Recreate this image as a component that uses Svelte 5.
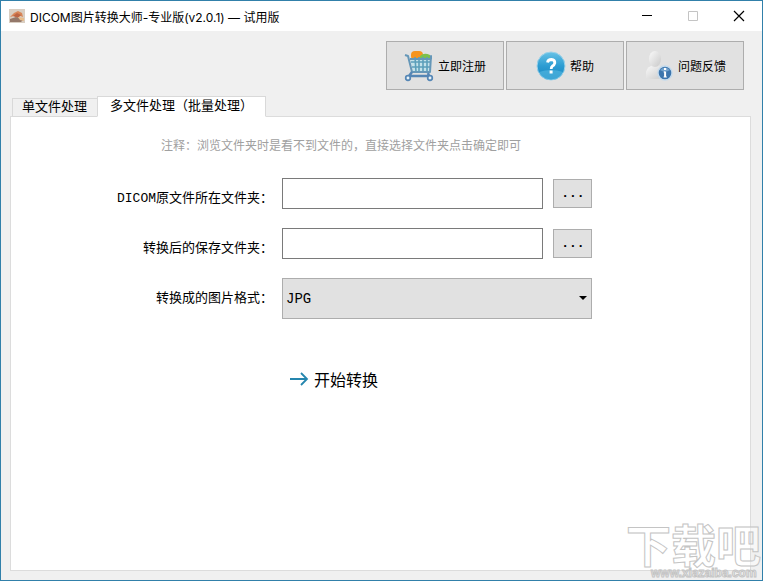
<script lang="ts">
  let activeTab = $state('batch');
  let sourceFolder = $state('');
  let targetFolder = $state('');
  let format = $state('JPG');

  const tabs = [
    { id: 'single', label: '单文件处理' },
    { id: 'batch', label: '多文件处理（批量处理）' },
  ];
  const formats = ['JPG', 'PNG', 'BMP', 'TIF'];
</script>

<main class="window">
  <header class="titlebar">
    <svg class="app-icon" viewBox="0 0 16 14" aria-hidden="true">
      <rect width="16" height="14" fill="#d9cec2" />
      <path d="M1 8L5 4L9 2L13 4L14 8L9 6Z" fill="#d98658" />
      <path d="M4 7L8 4L12 6L9 9Z" fill="#bd6443" />
      <path d="M1 10L7 8L14 11L12 13L1 13Z" fill="#94786a" />
      <path d="M9 8L15 9L15 12L11 11Z" fill="#e9bd8a" />
    </svg>
    <h1>DICOM图片转换大师-专业版(v2.0.1) — 试用版</h1>
    <div class="controls">
      <button aria-label="最小化">
        <svg viewBox="0 0 12 12"><path d="M1 5.5H11" stroke="#000" /></svg>
      </button>
      <button aria-label="最大化" disabled>
        <svg viewBox="0 0 12 12"><path d="M1.5 1.5H10.5V10.5H1.5Z" fill="none" stroke="#c4c4c4" /></svg>
      </button>
      <button aria-label="关闭">
        <svg viewBox="0 0 12 12"><path d="M1 1L11 11M11 1L1 11" stroke="#000" stroke-width="1.2" /></svg>
      </button>
    </div>
  </header>

  <nav class="toolbar">
    <button>
      <svg width="30" height="32" viewBox="0 0 30 32" aria-hidden="true">
        <rect x="7" y="1" width="12" height="9" rx="4" fill="#f7941d" />
        <path d="M16 9V6Q20 2 26 5V9Z" fill="#7cc04b" />
        <path d="M6 9H27L26 21H9Z" fill="#c3e2ea" />
        <path d="M7 12H26M8 17H26M11 7L12 22M15 7V22M19 7V22M23 7V22" stroke="#5c9fba" stroke-width="1.6" fill="none" />
        <path d="M1 5L4 6L8 22H26L27 6V9H6" stroke="#6597b8" stroke-width="2" stroke-linejoin="round" fill="none" />
        <path d="M8 22L5 26H25L24 23" stroke="#5586b5" stroke-width="2.5" stroke-linejoin="round" fill="none" />
        <circle cx="4" cy="28" r="2.3" fill="#e7f2f7" stroke="#5586b5" stroke-width="1.7" />
        <circle cx="26" cy="28" r="2.3" fill="#e7f2f7" stroke="#5586b5" stroke-width="1.7" />
      </svg>
      <span>立即注册</span>
    </button>
    <button>
      <svg width="30" height="32" viewBox="0 0 30 32" aria-hidden="true">
        <defs>
          <linearGradient id="helpFill" x1="0" y1="0" x2="0" y2="1">
            <stop offset="0" stop-color="#67c2e6" />
            <stop offset="0.5" stop-color="#2c9cd2" />
            <stop offset="1" stop-color="#1683be" />
          </linearGradient>
        </defs>
        <circle cx="15" cy="16" r="14" fill="url(#helpFill)" stroke="#9bd2ea" />
        <path d="M3 22A13 13 0 0 0 27 22Q15 18 3 22Z" fill="#58bbe2" opacity="0.6" />
        <path d="M11.5 12.5Q12 9.5 15.5 9.5Q19 9.8 18.8 13Q18.4 15 16.5 16Q15.2 16.8 15.2 19" stroke="#fff" stroke-width="2.8" fill="none" />
        <rect x="13.6" y="20.5" width="3" height="3" fill="#fff" />
      </svg>
      <span>帮助</span>
    </button>
    <button>
      <svg width="30" height="32" viewBox="0 0 30 32" aria-hidden="true">
        <defs>
          <linearGradient id="personFill" x1="0" y1="0" x2="1" y2="1">
            <stop offset="0" stop-color="#fafafa" />
            <stop offset="1" stop-color="#c9c9c9" />
          </linearGradient>
        </defs>
        <path d="M2 28V22Q3 16 11 15Q19 16 20 22V28Q11 30 2 28Z" fill="url(#personFill)" />
        <ellipse cx="11" cy="9" rx="6" ry="8" fill="url(#personFill)" />
        <circle cx="21" cy="23" r="7" fill="#3c75ad" stroke="#c5dbed" stroke-width="1.4" />
        <path d="M16 20Q21 15 26 20Q21 23 16 20Z" fill="#8ab5da" opacity="0.7" />
        <rect x="20" y="18" width="2.2" height="2" fill="#fff" />
        <path d="M21.1 21.5V27" stroke="#fff" stroke-width="2" fill="none" />
        <path d="M19.6 22H21M19.6 27H22.8" stroke="#fff" fill="none" />
      </svg>
      <span>问题反馈</span>
    </button>
  </nav>

  <div class="tabs" role="tablist">
    {#each tabs as tab}
      <button
        role="tab"
        class:active={activeTab === tab.id}
        aria-selected={activeTab === tab.id}
        onclick={() => (activeTab = tab.id)}
      >{tab.label}</button>
    {/each}
  </div>

  <section class="panel">
    <p class="note">注释：浏览文件夹时是看不到文件的，直接选择文件夹点击确定即可</p>

    <form onsubmit={(e) => e.preventDefault()}>
      <label for="source">DICOM原文件所在文件夹：</label>
      <div class="field">
        <input id="source" type="text" bind:value={sourceFolder} />
        <button type="button" class="browse">...</button>
      </div>

      <label for="target">转换后的保存文件夹：</label>
      <div class="field">
        <input id="target" type="text" bind:value={targetFolder} />
        <button type="button" class="browse">...</button>
      </div>

      <label for="format">转换成的图片格式：</label>
      <div class="field">
        <select id="format" bind:value={format}>
          {#each formats as item}
            <option value={item}>{item}</option>
          {/each}
        </select>
        <svg class="caret" width="8" height="4" viewBox="0 0 8 4" aria-hidden="true"><path d="M0 0H8L4 4Z" /></svg>
      </div>

      <button type="submit" class="start">
        <svg width="20" height="14" viewBox="0 0 20 14" aria-hidden="true">
          <path d="M1 7H18M12 1L18 7L12 13" fill="none" stroke="#2586ae" stroke-width="1.8" />
        </svg>
        <span>开始转换</span>
      </button>
    </form>
  </section>

  <svg class="watermark" width="136" height="58" viewBox="0 0 136 58">
    <text class="mark" x="0" y="41">下载吧</text>
    <text class="site" x="25" y="55">www.xiazaiba.com</text>
  </svg>
</main>

<style>
  :global(body) {
    margin: 0;
  }

  .window {
    position: relative;
    box-sizing: border-box;
    display: flex;
    flex-direction: column;
    min-height: 100vh;
    padding-bottom: 9px;
    border: 1px solid #3180aa;
    background: #f0f0f0;
    color: #000;
    font-family: "Liberation Mono", "Noto Sans CJK SC", monospace;
    font-size: 13px;
  }

  button,
  input,
  select {
    box-sizing: border-box;
    margin: 0;
    padding: 0;
    border-radius: 0;
    color: inherit;
    font: inherit;
  }

  .titlebar {
    display: flex;
    align-items: center;
    height: 30px;
    padding-left: 8px;
    background: #fff;
  }

  .app-icon {
    width: 16px;
    height: 14px;
    margin-right: 5px;
  }

  h1 {
    flex: 1;
    margin: 0;
    font: 12px Inter, "Noto Sans CJK SC", sans-serif;
    white-space: nowrap;
  }

  .controls {
    display: flex;
  }

  .controls button {
    display: grid;
    place-items: center;
    width: 46px;
    height: 28px;
    border: 0;
    background: none;
  }

  .controls svg {
    width: 12px;
    height: 12px;
  }

  .toolbar {
    display: flex;
    justify-content: flex-end;
    gap: 2px;
    padding: 10px 18px 0 0;
  }

  .toolbar button {
    display: flex;
    align-items: center;
    justify-content: center;
    gap: 4px;
    width: 118px;
    height: 49px;
    border: 1px solid #adadad;
    background: #e1e1e1;
    font-size: 12px;
  }

  .tabs {
    position: relative;
    display: flex;
    align-items: flex-end;
    margin: 6px 0 -1px 11px;
  }

  .tabs button {
    height: 19px;
    padding: 0 10px 0 9px;
    border: 1px solid #d9d9d9;
    background: #f0f0f0;
    line-height: 17px;
  }

  .tabs button.active {
    height: 21px;
    margin-left: -1px;
    padding: 0 12px;
    border-bottom-color: #fff;
    background: #fff;
    line-height: 19px;
  }

  .panel {
    flex: 1;
    margin: 0 11px 0 9px;
    border: 1px solid #dcdcdc;
    background: #fff;
  }

  .note {
    margin: 20px 0 21px 150px;
    color: #a0a0a0;
    font-size: 12px;
    line-height: 20px;
  }

  form {
    display: grid;
    grid-template-columns: 36% 42%;
    grid-auto-rows: 41px;
    gap: 9px 5px;
  }

  label {
    padding-right: 4px;
    line-height: 41px;
    text-align: right;
    white-space: nowrap;
  }

  .field {
    position: relative;
    display: flex;
    align-items: flex-start;
    gap: 10px;
  }

  input {
    flex: 1;
    min-width: 0;
    height: 31px;
    padding: 0 4px;
    border: 1px solid #7a7a7a;
    background: #fff;
  }

  .browse {
    width: 39px;
    height: 29px;
    margin-top: 1px;
    border: 1px solid #adadad;
    background: #e1e1e1;
    font-weight: bold;
  }

  select {
    appearance: none;
    width: 100%;
    height: 41px;
    padding: 0 20px 0 3px;
    border: 1px solid #adadad;
    background: #e1e1e1;
    font-size: 14px;
  }

  .caret {
    position: absolute;
    top: 18px;
    right: 5px;
    pointer-events: none;
  }

  .start {
    grid-column: 2;
    justify-self: start;
    display: flex;
    align-items: center;
    gap: 5px;
    margin-top: 30px;
    padding: 0 7px;
    height: 41px;
    border: 0;
    background: none;
    font-size: 16px;
  }

  .watermark {
    position: absolute;
    right: 0;
    bottom: 0;
    overflow: visible;
    pointer-events: none;
  }

  .watermark text {
    fill: #fff;
    fill-opacity: 0.5;
    stroke: #c4c4c4;
    stroke-width: 1px;
  }

  .mark {
    font: bold 45px "Noto Sans CJK SC", sans-serif;
  }

  .site {
    font: bold 12px "Liberation Sans", sans-serif;
  }
</style>
